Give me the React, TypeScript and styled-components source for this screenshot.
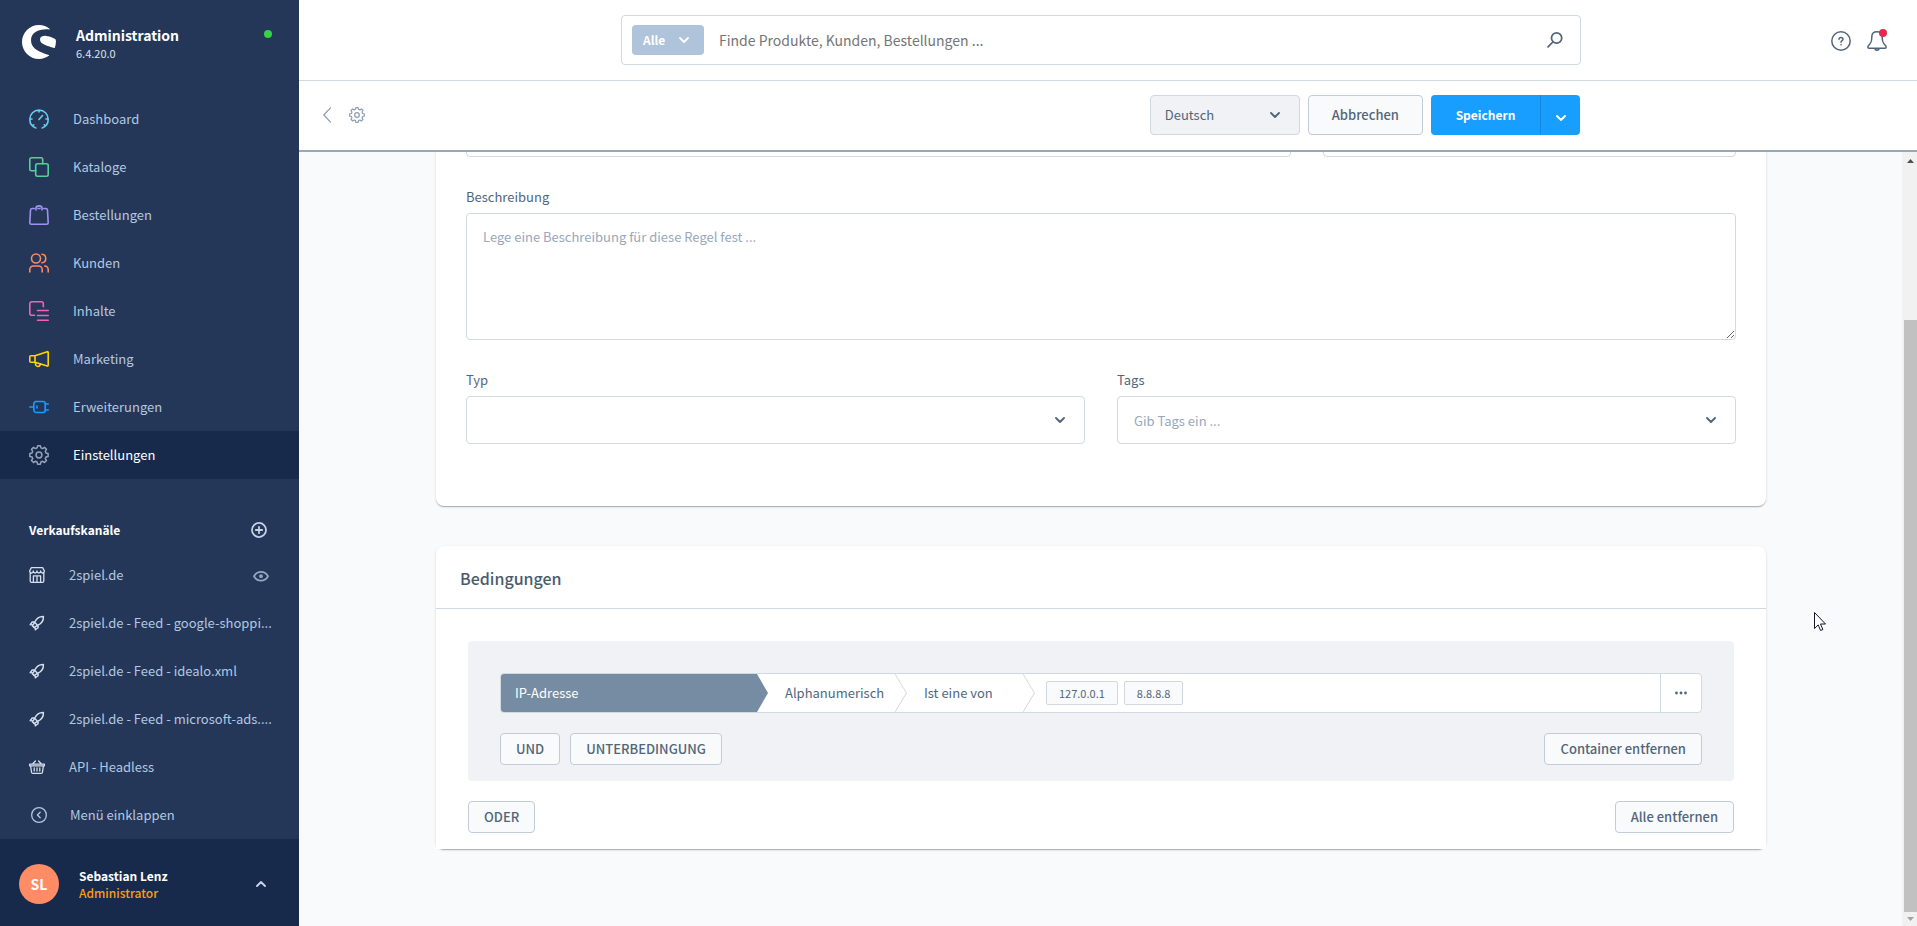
import React, { useLayoutEffect, useRef } from "react";
import styled, { createGlobalStyle } from "styled-components";

const color = {
  navy: "#243758",
  navyDark: "#182a4c",
  navText: "#b3c8e2",
  text: "#52667a",
  border: "#d1d9e0",
  buttonBorder: "#c2ccd6",
  surface: "#f9fafb",
  grey: "#f0f2f5",
  primary: "#189eff",
};

const GlobalStyle = createGlobalStyle`
  *, *::before, *::after { box-sizing: border-box; }
  body {
    margin: 0;
    font-family: "Source Sans Pro", "Noto Sans CJK SC", sans-serif;
    font-size: 13px;
    line-height: 20px;
    color: ${color.text};
  }
  button, input, textarea, select { font: inherit; color: inherit; }
  button { cursor: pointer; }
  svg { display: block; flex: none; }
  a { color: inherit; text-decoration: none; }
`;

const Shell = styled.div`
  display: grid;
  grid-template-columns: 299px minmax(0, 1fr);
  height: 100vh;
  overflow: hidden;
`;

/* Sidebar */

const Sidebar = styled.aside`
  display: flex;
  flex-direction: column;
  background: ${color.navy};
  color: ${color.navText};
`;

const Brand = styled.header`
  display: flex;
  align-items: flex-start;
  height: 95px;
  padding: 25px 27px 0 22px;
`;

const BrandText = styled.div`
  flex: 1;
  margin-left: 20px;
`;

const BrandName = styled.div`
  color: #fff;
  font-size: 14px;
  font-weight: 700;
`;

const Version = styled.div`
  font-size: 11px;
  line-height: 16px;
  color: #dbe4f0;
`;

const StatusDot = styled.span`
  width: 8px;
  height: 8px;
  margin-top: 5px;
  border-radius: 50%;
  background: #37d046;
`;

const NavList = styled.ul`
  margin: 0;
  padding: 0;
  list-style: none;
`;

const NavLink = styled.a<{ $active?: boolean }>`
  display: flex;
  align-items: center;
  height: 48px;
  padding: 0 27px 0 29px;
  gap: 24px;
  background: ${(p) => (p.$active ? color.navyDark : "transparent")};
  color: ${(p) => (p.$active ? "#fff" : color.navText)};
`;

const NavLabel = styled.span`
  flex: 1;
  white-space: nowrap;
`;

const Visibility = styled.span`
  padding-right: 3px;
`;

const ChannelHeader = styled.div`
  display: flex;
  align-items: center;
  justify-content: space-between;
  height: 72px;
  padding: 30px 32px 0 29px;
`;

const ChannelTitle = styled.h2`
  margin: 0;
  color: #fff;
  font-size: 12px;
  line-height: 20px;
  font-weight: 700;
`;

const IconButton = styled.button`
  display: flex;
  align-items: center;
  justify-content: center;
  padding: 0;
  border: 0;
  background: none;
`;

const CollapseButton = styled.button`
  display: flex;
  align-items: center;
  height: 48px;
  padding: 0 31px;
  gap: 23px;
  border: 0;
  background: none;
  color: ${color.navText};
`;

const UserBar = styled.footer`
  display: flex;
  align-items: center;
  flex: 1;
  min-height: 87px;
  padding: 2px 33px 0 19px;
  background: ${color.navyDark};
`;

const Avatar = styled.span`
  width: 40px;
  height: 40px;
  margin-right: 20px;
  border-radius: 50%;
  background: #ff8c65;
  color: #fff;
  font-size: 14px;
  font-weight: 700;
  line-height: 40px;
  text-align: center;
`;

const UserText = styled.div`
  flex: 1;
  font-size: 12px;
  font-weight: 700;
  line-height: 17px;
  color: #fff;
`;

const UserRole = styled.div`
  color: #ff9c12;
  font-weight: 500;
`;

/* Header */

const Main = styled.div`
  display: flex;
  flex-direction: column;
  min-width: 0;
  min-height: 0;
`;

const TopBar = styled.header`
  display: grid;
  grid-template-columns: 322px minmax(0, 1fr) 336px;
  align-items: center;
  height: 81px;
  border-bottom: 1px solid ${color.border};
  background: #fff;
`;

const SearchForm = styled.form`
  grid-column: 2;
  display: flex;
  align-items: center;
  height: 50px;
  padding: 0 17px 0 10px;
  border: 1px solid ${color.border};
  border-radius: 4px;
`;

const ScopeButton = styled.button`
  display: flex;
  align-items: center;
  justify-content: space-between;
  width: 72px;
  height: 30px;
  padding: 0 15px 0 11px;
  border: 0;
  border-radius: 4px;
  background: #afc3da;
  color: #fff;
  font-size: 12px;
  font-weight: 700;
`;

const SearchInput = styled.input`
  flex: 1;
  min-width: 0;
  padding: 0 15px;
  border: 0;
  outline: 0;
  font-size: 14px;
  &::placeholder { color: #757575; opacity: 1; }
`;

const TopActions = styled.div`
  display: flex;
  justify-content: flex-end;
  gap: 16px;
  padding: 2px 30px 0 0;
`;

const BellButton = styled(IconButton)`
  position: relative;
`;

const BellBadge = styled.span`
  position: absolute;
  top: -2px;
  right: 0;
  width: 8px;
  height: 8px;
  border-radius: 50%;
  background: #e32b50;
`;

const ActionBar = styled.div`
  display: flex;
  align-items: center;
  height: 71px;
  padding: 0 337px 2px 24px;
  border-bottom: 2px solid #98a8b8;
  background: #fff;
`;

const BackLinks = styled.nav`
  display: flex;
  align-items: center;
  flex: 1;
  gap: 18px;
`;

const Actions = styled.div`
  display: flex;
  gap: 8px;
`;

const SelectBox = styled.div<{ $muted?: boolean }>`
  display: flex;
  align-items: center;
  position: relative;
  width: ${(p) => (p.$muted ? "150px" : "100%")};
  height: ${(p) => (p.$muted ? "40px" : "48px")};
  border: 1px solid ${color.border};
  border-radius: 4px;
  background: ${(p) => (p.$muted ? color.grey : "#fff")};

  select, input {
    width: 100%;
    height: 100%;
    padding: 0 ${(p) => (p.$muted ? "14px" : "16px")};
    border: 0;
    outline: 0;
    background: none;
    appearance: none;
  }
  input::placeholder { color: #98a7bb; opacity: 1; }
  svg {
    position: absolute;
    right: 19px;
    pointer-events: none;
  }
`;

const Button = styled.button<{ $large?: boolean }>`
  height: ${(p) => (p.$large ? "40px" : "32px")};
  padding: 0 ${(p) => (p.$large ? "23px" : "15px")};
  border: 1px solid ${color.buttonBorder};
  border-radius: 4px;
  background: ${color.surface};
  font-weight: 500;
  white-space: nowrap;
`;

const SplitButton = styled.div`
  display: flex;
  border-radius: 4px;
  overflow: hidden;
`;

const SplitMain = styled.button`
  height: 40px;
  width: 109px;
  border: 0;
  background: ${color.primary};
  color: #fff;
  font-size: 12px;
  font-weight: 700;
`;

const SplitToggle = styled.button`
  display: flex;
  align-items: center;
  justify-content: center;
  width: 40px;
  padding: 6px 0 0;
  border: 0;
  border-left: 1px solid #1486dc;
  background: ${color.primary};
  color: #fff;
`;

/* Content */

const ContentRow = styled.div`
  display: flex;
  flex: 1;
  min-height: 0;
  background: ${color.surface};
`;

const Scroller = styled.main`
  flex: 1;
  min-width: 0;
  padding: 60px 136px 77px 137px;
  overflow-y: scroll;
  scrollbar-width: none;
`;

const Card = styled.section`
  border-radius: 8px;
  background: #fff;
  box-shadow: 0 1px 1px rgba(0, 0, 0, 0.14), 0 2px 1px -1px rgba(0, 0, 0, 0.12),
    0 1px 3px rgba(0, 0, 0, 0.12);
  & + & { margin-top: 40px; }
`;

const FormBody = styled.div`
  display: flex;
  flex-direction: column;
  gap: 30px;
  padding: 60px 30px 62px;
`;

const FieldRow = styled.div<{ $columns: string }>`
  display: grid;
  grid-template-columns: ${(p) => p.$columns};
  gap: 32px;
`;

const FieldLabel = styled.label`
  display: block;
  margin-bottom: 6px;
`;

const TextInput = styled.input`
  width: 100%;
  height: 48px;
  padding: 0 16px;
  border: 1px solid ${color.border};
  border-radius: 4px;
`;

const TextArea = styled.textarea`
  display: block;
  width: 100%;
  height: 127px;
  padding: 13px 16px;
  border: 1px solid ${color.border};
  border-radius: 4px;
  outline: 0;
  resize: vertical;
  &::placeholder { color: #98a7bb; opacity: 1; }
`;

const CardHeader = styled.header`
  padding: 20px 24px 18px;
  border-bottom: 1px solid ${color.border};
`;

const CardTitle = styled.h2`
  margin: 0;
  font-size: 16px;
  line-height: 24px;
  font-weight: 500;
  color: #4a5b6d;
`;

const RuleBody = styled.div`
  padding: 32px 32px 16px;
  background: #fff;
`;

const RuleContainer = styled.div`
  padding: 32px 32px 16px;
  border-radius: 4px;
  background: ${color.grey};
`;

const Condition = styled.div`
  display: flex;
  height: 40px;
  border: 1px solid ${color.border};
  border-radius: 4px;
  background: #fff;
  overflow: hidden;
`;

const ConditionType = styled.button`
  width: 267px;
  padding: 0 14px;
  border: 0;
  background: #758ca3;
  clip-path: polygon(0 0, 256px 0, 100% 50%, 256px 100%, 0 100%);
  color: #fff;
  text-align: left;
`;

const ConditionStep = styled.button<{ $width: string }>`
  display: flex;
  align-items: center;
  justify-content: space-between;
  width: ${(p) => p.$width};
  padding: 0 0 0 17px;
  border: 0;
  background: none;
`;

const ConditionValues = styled.div`
  display: flex;
  align-items: center;
  flex: 1;
  gap: 6px;
  padding: 0 11px;
`;

const Tag = styled.span`
  height: 24px;
  padding: 0 12px;
  border: 1px solid ${color.border};
  border-radius: 2px;
  background: ${color.surface};
  font-size: 11px;
  line-height: 22px;
`;

const ContextButton = styled(IconButton)`
  width: 41px;
  border-left: 1px solid ${color.border};
`;

const ButtonRow = styled.div`
  display: flex;
  gap: 10px;
  margin-top: 20px;
`;

const Spacer = styled.span`
  flex: 1;
`;

const ScrollTrack = styled.div`
  display: flex;
  flex-direction: column;
  align-items: flex-end;
  width: 15px;
  background: #f1f1f1;
`;

const ScrollArrow = styled.span`
  display: flex;
  align-items: center;
  justify-content: center;
  width: 13px;
  height: 14px;
  &:first-child { margin-top: 2px; }
`;

const ScrollThumb = styled.span`
  flex: 1;
  width: 13px;
  margin-top: 152px;
  background: #c1c1c1;
`;

const Pointer = styled.div`
  position: fixed;
  left: 1814px;
  top: 612px;
  pointer-events: none;
`;

/* Icons */

type IconProps = { size?: number; tint?: string; width?: number; children: React.ReactNode };

const Icon = ({ size = 20, tint = "currentColor", width = 1.6, children }: IconProps) => (
  <svg
    width={size}
    height={size}
    viewBox="0 0 20 20"
    fill="none"
    stroke={tint}
    strokeWidth={width}
    strokeLinecap="round"
    strokeLinejoin="round"
    aria-hidden="true"
  >
    {children}
  </svg>
);

const Chevron = ({ size = 10, up = false, tint = "currentColor" }) => (
  <svg width={size} height={size} viewBox="0 0 10 10" fill="none" stroke={tint} strokeWidth="1.9" strokeLinecap="round" strokeLinejoin="round" aria-hidden="true">
    <path d={up ? "M1 7l4-4 4 4" : "M1 3l4 4 4-4"} />
  </svg>
);

const gearPath =
  "M8.6 .8h2.8l.5 2.1 1.7.7 1.9-1.2 2 2-1.2 1.9.7 1.8 2.1.5v2.8l-2.1.5-.7 1.7 1.2 1.9-2 2-1.9-1.2-1.7.7-.5 2.2H8.6l-.5-2.2-1.7-.7-1.9 1.2-2-2 1.2-1.9-.7-1.7-2.2-.5V8.6L3 8.1l.7-1.8-1.2-1.9 2-2 1.9 1.2 1.7-.7z";

const GearIcon = ({ size = 20, tint = "#94a3b8" }) => (
  <Icon size={size} tint={tint} width={1.5}>
    <path d={gearPath} />
    <circle cx="10" cy="10" r="2.9" />
  </Icon>
);

const Logo = () => (
  <svg width="34" height="34" viewBox="0 0 34 34" aria-hidden="true">
    <path
      fill="#fff"
      d="M27.8 4C24.900 1.500 21.100 0 17 0 7.600 0 0 7.600 0 17s7.600 17 17 17c3.700 0 7.100-1.200 9.900-3.200.3-.2.300-.6-.1-.7C18.500 27 9 24.500 9 15.300 9 7.300 17.500 3.500 27.600 4.500c.4 0 .5-.3.200-.5z"
    />
    <path
      fill="#fff"
      d="M33.700 14.500c-1.600-1.500-4.900-3.200-9.500-3.600-3.800-.3-6.200 1.100-6.200 3.500 0 4.700 6.500 6 14.200 8.600.4.1.6 0 .7-.4.900-2.600 1.300-5.300.8-8.100z"
    />
  </svg>
);

const mainNav = [
  {
    label: "Dashboard",
    tint: "#66cdea",
    icon: (
      <path d="M6.800 18.900C3.200 17.800.8 14.500.8 10.300a9.200 9.200 0 0 1 18.400 0c0 4.200-2.400 7.500-6 8.600M10 1v2M1 10h2M17 10h2M10 10.500l3.500-4M3.800 16.700l.9-.8M16.200 16.700l-.9-.8" />
    ),
  },
  {
    label: "Kataloge",
    tint: "#54d09a",
    icon: (
      <>
        <path d="M6.700 13.700H2.500A1.700 1.700 0 0 1 .8 12V2.500A1.700 1.700 0 0 1 2.500.8H12a1.700 1.700 0 0 1 1.700 1.700v4.200" />
        <rect x="6.700" y="6.700" width="12.500" height="12.500" rx="1.700" />
      </>
    ),
  },
  {
    label: "Bestellungen",
    tint: "#a092f0",
    icon: (
      <path d="M5.300 3.500H3.200c-1 0-1.600.6-1.700 1.500L.8 17.700c0 .9.600 1.500 1.500 1.500h15.400c.9 0 1.500-.6 1.500-1.500L18.500 5c-.1-.9-.7-1.500-1.700-1.500h-2.100M9 3.500h2M7 5V3.300c0-3.200 6-3.200 6 0V5" />
    ),
  },
  {
    label: "Kunden",
    tint: "#fa8a64",
    icon: (
      <>
        <circle cx="7" cy="5.500" r="4.500" />
        <path d="M.8 19v-2.500A3.500 3.500 0 0 1 4.300 13h5.400a3.500 3.500 0 0 1 3.500 3.500V19M13 1.200c5 .5 5 8 0 8.600M15.700 13a3.500 3.500 0 0 1 3.500 3.500V19" />
      </>
    ),
  },
  {
    label: "Inhalte",
    tint: "#f562b4",
    icon: <path d="M5.500 14.300H2.800a2 2 0 0 1-2-2V2.800a2 2 0 0 1 2-2h9.500a2 2 0 0 1 2 2v3M8.500 9.500h10.700M8.500 14.500h10.700M8.500 19.200h10.700" />,
  },
  {
    label: "Marketing",
    tint: "#ffd500",
    icon: (
      <path d="M6 6.700L18.300 2.700a.7.7 0 0 1 .9.700v13a.7.7 0 0 1-.9.700L6 13.200zM6 6.700H1.800a1 1 0 0 0-1 1v4.500a1 1 0 0 0 1 1H6M6.500 13.500v1.700a2.400 2.400 0 0 0 4.700.5v-.9" />
    ),
  },
  {
    label: "Erweiterungen",
    tint: "#189eff",
    icon: (
      <path d="M.8 10h4M6.800 4.500h7.400a2 2 0 0 1 2 2v7a2 2 0 0 1-2 2H7.500A2.700 2.700 0 0 1 4.800 12.800V7.500a3 3 0 0 1 2-3zM16.200 7h3M16.200 13h3M8 9v2" />
    ),
  },
];

const RocketIcon = () => (
  <Icon size={16} tint="#d6e0ec" width={1.8}>
    <path d="M18 1.800c-5-.2-8.700 2.500-11 7.300l3.900 3.900c4.800-2.300 7.400-6.200 7.100-11.200zM7.300 8.600L4 8.700 1.500 12l3.200.6M11.400 12.700l-.1 3.300L8 18.500l-.6-3.200M7 9.100l-2.600 4.600 1.900 1.900 4.600-2.600" />
  </Icon>
);

const channels = [
  {
    label: "2spiel.de",
    visible: true,
    icon: (
      <Icon size={16} tint="#d6e0ec">
        <path d="M1.500 7v10.500a1.700 1.700 0 0 0 1.700 1.700h13.600a1.700 1.700 0 0 0 1.700-1.700V7M3 .8h14l2.200 4c0 3.600-4.600 3.600-4.600 0 0 3.600-4.600 3.600-4.600 0 0 3.600-4.600 3.600-4.600 0 0 3.600-4.600 3.600-4.600 0zM5.500 19v-8h9v8M10 11v8" />
      </Icon>
    ),
  },
  { label: "2spiel.de - Feed - google-shoppi...", icon: <RocketIcon /> },
  { label: "2spiel.de - Feed - idealo.xml", icon: <RocketIcon /> },
  { label: "2spiel.de - Feed - microsoft-ads....", icon: <RocketIcon /> },
  {
    label: "API - Headless",
    icon: (
      <Icon size={16} tint="#d6e0ec">
        <path d="M.8 6.500h18.400v2H.8zM2 8.500l1.200 8.300a1.500 1.500 0 0 0 1.500 1.200h10.600a1.500 1.500 0 0 0 1.500-1.200L18 8.500M4.500 6.300L8 2.500M15.500 6.300L12 2.500M6.500 11v4M10 11v4M13.500 11v4" />
      </Icon>
    ),
  },
];

const StepEdge = () => (
  <svg width="12" height="38" viewBox="0 0 12 38" fill="none" stroke={color.border} aria-hidden="true">
    <path d="M0 0l11.500 19L0 38" />
  </svg>
);

export default function App() {
  const scroller = useRef<HTMLElement>(null);

  useLayoutEffect(() => {
    const node = scroller.current;
    if (node) node.scrollTop = node.scrollHeight;
  }, []);

  return (
    <>
      <GlobalStyle />
      <Shell>
        <Sidebar>
          <Brand>
            <Logo />
            <BrandText>
              <BrandName>Administration</BrandName>
              <Version>6.4.20.0</Version>
            </BrandText>
            <StatusDot />
          </Brand>
          <nav>
            <NavList>
              {mainNav.map((item) => (
                <li key={item.label}>
                  <NavLink href="#">
                    <Icon tint={item.tint}>{item.icon}</Icon>
                    <NavLabel>{item.label}</NavLabel>
                  </NavLink>
                </li>
              ))}
              <li>
                <NavLink href="#" $active>
                  <GearIcon />
                  <NavLabel>Einstellungen</NavLabel>
                </NavLink>
              </li>
            </NavList>
            <ChannelHeader>
              <ChannelTitle>Verkaufskanäle</ChannelTitle>
              <IconButton aria-label="Verkaufskanal hinzufügen">
                <Icon size={16} tint="#c3d3e8" width={2.2}>
                  <circle cx="10" cy="10" r="8.800" />
                  <path d="M10 6v8M6 10h8" />
                </Icon>
              </IconButton>
            </ChannelHeader>
            <NavList>
              {channels.map((channel) => (
                <li key={channel.label}>
                  <NavLink href="#">
                    {channel.icon}
                    <NavLabel>{channel.label}</NavLabel>
                    {channel.visible && (
                      <Visibility>
                        <Icon size={16} tint="#94a8c2" width={2.2}>
                          <path d="M1.200 11.500c4-7.200 13.600-7.200 17.600 0-4 7.200-13.600 7.200-17.600 0z" />
                          <circle cx="10" cy="11.500" r="1.300" />
                        </Icon>
                      </Visibility>
                    )}
                  </NavLink>
                </li>
              ))}
            </NavList>
          </nav>
          <CollapseButton>
            <Icon size={16}>
              <circle cx="10" cy="10" r="9.200" />
              <path d="M11.500 6.500L8 10l3.500 3.500" />
            </Icon>
            Menü einklappen
          </CollapseButton>
          <UserBar>
            <Avatar>SL</Avatar>
            <UserText>
              Sebastian Lenz
              <UserRole>Administrator</UserRole>
            </UserText>
            <IconButton aria-label="Benutzermenü">
              <Chevron up tint="#c3d3e8" />
            </IconButton>
          </UserBar>
        </Sidebar>

        <Main>
          <TopBar>
            <SearchForm role="search">
              <ScopeButton type="button">
                Alle
                <Chevron />
              </ScopeButton>
              <SearchInput aria-label="Suche" placeholder="Finde Produkte, Kunden, Bestellungen ..." />
              <IconButton type="submit" aria-label="Suchen">
                <Icon size={16} width={2.2}>
                  <circle cx="12" cy="7.500" r="6.400" />
                  <path d="M7.300 12.500l-6 6" />
                </Icon>
              </IconButton>
            </SearchForm>
            <TopActions>
              <IconButton aria-label="Hilfe">
                <Icon width={1.5}>
                  <circle cx="10" cy="10" r="9.200" />
                  <path d="M8 8.300c0-2.600 4-2.500 4 0 0 1.400-2 1.300-2 2.900M10 13.600v.1" />
                </Icon>
              </IconButton>
              <BellButton aria-label="Benachrichtigungen">
                <Icon width={1.5}>
                  <path d="M10 .8c3.300 0 5.200 2.200 5.200 5.200 0 5 .9 6.300 3.200 8.500 1.100 1.100.9 2.700-.5 2.700H2.100c-1.400 0-1.600-1.600-.5-2.700C3.900 12.300 4.800 11 4.800 6c0-3 1.900-5.200 5.200-5.200zM8 17.300c0 2.500 4 2.500 4 0" />
                </Icon>
                <BellBadge />
              </BellButton>
            </TopActions>
          </TopBar>

          <ActionBar>
            <BackLinks aria-label="Zurück">
              <a href="#" aria-label="Zurück">
                <svg width="8" height="16" viewBox="0 0 8 16" fill="none" stroke="#8c9db0" strokeWidth="1.200" strokeLinecap="round" strokeLinejoin="round" aria-hidden="true">
                  <path d="M7.500.8L.8 8l6.700 7.200" />
                </svg>
              </a>
              <a href="#" aria-label="Einstellungen">
                <GearIcon size={16} tint="#8c9db0" />
              </a>
            </BackLinks>
            <Actions>
              <SelectBox $muted>
                <select aria-label="Sprache" defaultValue="de">
                  <option value="de">Deutsch</option>
                </select>
                <Chevron />
              </SelectBox>
              <Button $large>Abbrechen</Button>
              <SplitButton>
                <SplitMain>Speichern</SplitMain>
                <SplitToggle aria-label="Weitere Optionen">
                  <Chevron />
                </SplitToggle>
              </SplitButton>
            </Actions>
          </ActionBar>

          <ContentRow>
            <Scroller ref={scroller}>
              <Card>
                <FormBody>
                  <FieldRow $columns="2fr 1fr">
                    <TextInput aria-label="Name" />
                    <TextInput aria-label="Priorität" />
                  </FieldRow>
                  <div>
                    <FieldLabel htmlFor="description">Beschreibung</FieldLabel>
                    <TextArea id="description" placeholder="Lege eine Beschreibung für diese Regel fest ..." />
                  </div>
                  <FieldRow $columns="1fr 1fr">
                    <div>
                      <FieldLabel htmlFor="type">Typ</FieldLabel>
                      <SelectBox>
                        <select id="type" />
                        <Chevron />
                      </SelectBox>
                    </div>
                    <div>
                      <FieldLabel htmlFor="tags">Tags</FieldLabel>
                      <SelectBox>
                        <input id="tags" placeholder="Gib Tags ein ..." />
                        <Chevron />
                      </SelectBox>
                    </div>
                  </FieldRow>
                </FormBody>
              </Card>

              <Card>
                <CardHeader>
                  <CardTitle>Bedingungen</CardTitle>
                </CardHeader>
                <RuleBody>
                  <RuleContainer>
                    <Condition>
                      <ConditionType>IP-Adresse</ConditionType>
                      <ConditionStep $width="139px">
                        Alphanumerisch
                        <StepEdge />
                      </ConditionStep>
                      <ConditionStep $width="128px">
                        Ist eine von
                        <StepEdge />
                      </ConditionStep>
                      <ConditionValues>
                        <Tag>127.0.0.1</Tag>
                        <Tag>8.8.8.8</Tag>
                      </ConditionValues>
                      <ContextButton aria-label="Optionen">
                        <svg width="12" height="4" viewBox="0 0 12 4" fill={color.text} aria-hidden="true">
                          <circle cx="1.500" cy="2" r="1.400" />
                          <circle cx="6" cy="2" r="1.400" />
                          <circle cx="10.500" cy="2" r="1.400" />
                        </svg>
                      </ContextButton>
                    </Condition>
                    <ButtonRow>
                      <Button>UND</Button>
                      <Button>UNTERBEDINGUNG</Button>
                      <Spacer />
                      <Button>Container entfernen</Button>
                    </ButtonRow>
                  </RuleContainer>
                  <ButtonRow>
                    <Button>ODER</Button>
                    <Spacer />
                    <Button>Alle entfernen</Button>
                  </ButtonRow>
                </RuleBody>
              </Card>
            </Scroller>
            <ScrollTrack aria-hidden="true">
              <ScrollArrow>
                <svg width="7" height="4" viewBox="0 0 7 4" fill="#505050"><path d="M0 4l3.500-4L7 4z" /></svg>
              </ScrollArrow>
              <ScrollThumb />
              <ScrollArrow>
                <svg width="7" height="4" viewBox="0 0 7 4" fill="#a3a3a3"><path d="M0 0l3.500 4L7 0z" /></svg>
              </ScrollArrow>
            </ScrollTrack>
          </ContentRow>
        </Main>
      </Shell>
      <Pointer>
        <svg width="12" height="19" viewBox="0 0 12 19" fill="#fff" stroke="#111827" strokeWidth="1" aria-hidden="true">
          <path d="M.5.500v16l3.700-3.600 2.400 5.600 2.300-1-2.400-5.500h5z" />
        </svg>
      </Pointer>
    </>
  );
}
